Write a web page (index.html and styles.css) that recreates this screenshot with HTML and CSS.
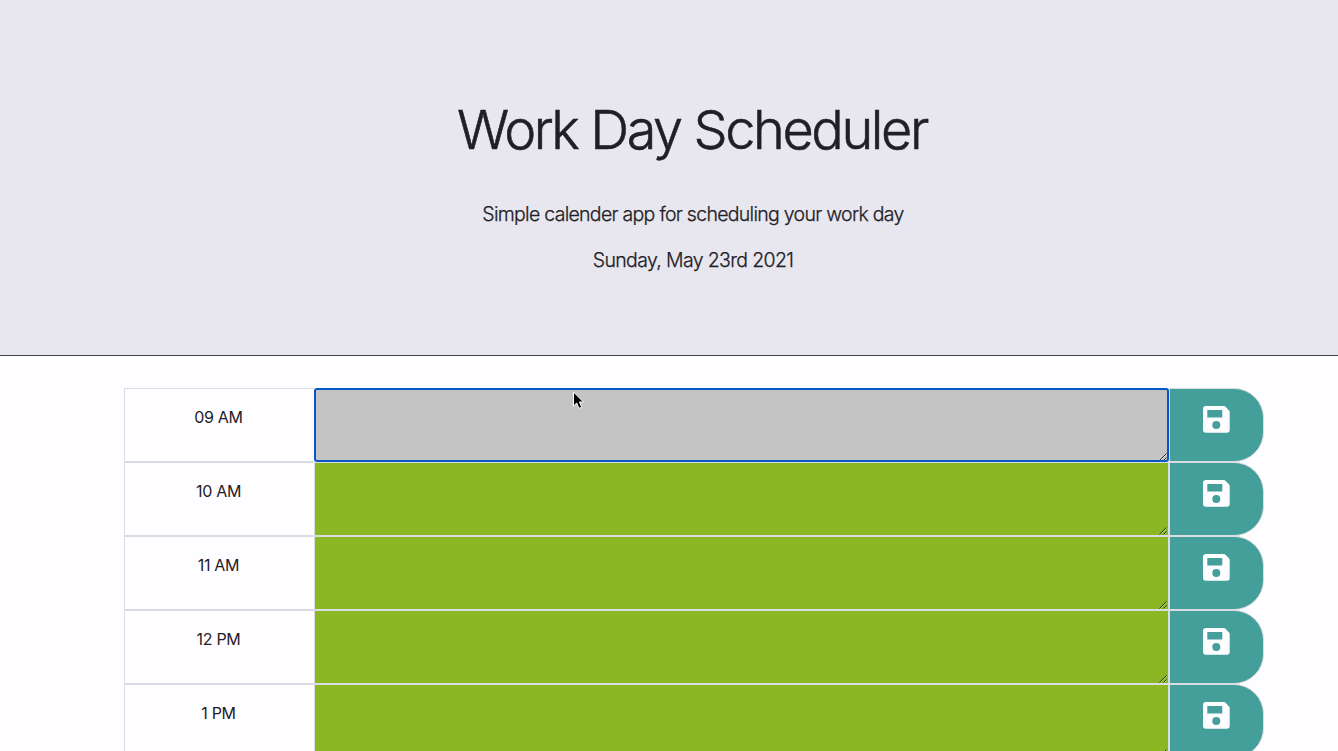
FILE: index.html
```html
<!DOCTYPE html>
<html lang="en">
<head>
<meta charset="utf-8">
<title>Work Day Scheduler</title>
<link rel="stylesheet" href="styles.css">
</head>
<body>
<svg class="defs" aria-hidden="true">
  <symbol id="save" viewBox="0 0 27 27">
    <path fill-rule="evenodd" d="M3 0H20.8Q21.8 0 22.5 .7L26 4.5Q26.7 5.2 26.7 6.2V23.7Q26.7 26.7 23.7 26.7H3Q0 26.7 0 23.7V3Q0 0 3 0ZM4.3 4.1V11.6H19.3V4.1ZM13.3 15A4 4 0 1 0 13.3 23A4 4 0 1 0 13.3 15Z"/>
  </symbol>
  <symbol id="grip" viewBox="0 0 8 8">
    <path d="M.5 7.5L7.5 .5M4.5 7.5L7.5 4.5" fill="none" stroke="#2b3320" stroke-width="1"/>
    <path d="M1.5 7.5L7.5 1.5M5.5 7.5L7.5 5.5" fill="none" stroke="#ffffff" stroke-opacity=".5" stroke-width=".7"/>
  </symbol>
</svg>
<header class="jumbotron">
  <h1 class="title">Work Day Scheduler</h1>
  <p class="lead">Simple calender app for scheduling your work day</p>
  <p class="lead date">Sunday, May 23rd 2021</p>
</header>
<main class="container">
  <div class="row">
    <div class="hour">09 AM</div>
    <div class="entry past focused"><svg class="grip"><use href="#grip"/></svg>
      <svg class="pointer" viewBox="0 0 13 19"><path d="M1.5 1V15L4.7 12L7 17.4L9.7 16.2L7.4 11H11.5Z" fill="#000" stroke="#fff" stroke-width="1"/></svg></div>
    <button class="save"><svg class="icon"><use href="#save"/></svg></button>
  </div>
  <div class="row">
    <div class="hour">10 AM</div>
    <div class="entry"><svg class="grip"><use href="#grip"/></svg></div>
    <button class="save"><svg class="icon"><use href="#save"/></svg></button>
  </div>
  <div class="row">
    <div class="hour">11 AM</div>
    <div class="entry"><svg class="grip"><use href="#grip"/></svg></div>
    <button class="save"><svg class="icon"><use href="#save"/></svg></button>
  </div>
  <div class="row">
    <div class="hour">12 PM</div>
    <div class="entry"><svg class="grip"><use href="#grip"/></svg></div>
    <button class="save"><svg class="icon"><use href="#save"/></svg></button>
  </div>
  <div class="row">
    <div class="hour">1 PM</div>
    <div class="entry"><svg class="grip"><use href="#grip"/></svg></div>
    <button class="save"><svg class="icon"><use href="#save"/></svg></button>
  </div>
</main>
</body>
</html>
```

FILE: styles.css
```css
* { box-sizing: border-box; }
html { overflow: hidden; }
body {
  margin: 0;
  height: 751px;
  overflow: hidden;
  background: #fefdff;
  color: #1f2026;
  font: 400 16px/24px Inter, "Liberation Sans", sans-serif;
}
.defs { display: none; }
.jumbotron {
  height: 356px;
  padding: 96px 0 0 48px;
  border-bottom: 1px solid #3c4245;
  background: #e8e7ef;
  text-align: center;
}
.title {
  margin: 0 0 36px;
  padding-right: 2px;
  font-size: 54px;
  font-weight: 300;
  line-height: 67px;
  letter-spacing: -2.4px;
  -webkit-text-stroke: 0.6px #1f2026;
}
.lead {
  margin: 0 0 16px;
  font-size: 19.5px;
  font-weight: 300;
  line-height: 30px;
  letter-spacing: -0.71px;
  -webkit-text-stroke: 0.25px #1f2026;
}
.date { letter-spacing: -0.64px; }
.container { width: 1140px; margin: 32px 0 0 124px; }
.row {
  display: grid;
  grid-template-columns: 190px 855px 95px;
  height: 74px;
}
.hour {
  padding: 16px 2px 0 0;
  border: 1px solid #d9dce5;
  border-right: 0;
  text-align: center;
  letter-spacing: -0.3px;
}
.entry {
  position: relative;
  border: 1px solid #d9dce0;
  background: #8bb722;
}
.entry.past { background: #c4c4c5; }
.entry.focused { border: 2px solid #0a55c8; border-radius: 3px; }
.grip { position: absolute; right: 1px; bottom: 0; width: 8px; height: 8px; }
.focused .grip { right: 0; bottom: -1px; }
.pointer { position: absolute; left: 256px; top: 1px; width: 13px; height: 19px; }
.save {
  display: flex;
  justify-content: center;
  align-items: flex-start;
  margin: 0;
  padding: 17.3px 1px 0 0;
  border: 1px solid #d9dce0;
  border-radius: 0 30px 30px 0;
  background: #449f9a;
}
.icon { width: 27px; height: 27px; fill: #fefdff; }
```
